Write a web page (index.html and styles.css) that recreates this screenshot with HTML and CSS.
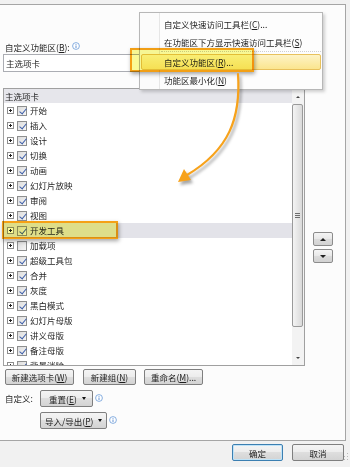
FILE: index.html
```html
<!DOCTYPE html>
<html lang="zh-CN">
<head>
<meta charset="utf-8">
<title>自定义功能区</title>
<link rel="stylesheet" href="styles.css">
</head>
<body>
<div class="screen">
  <div class="panel">
    <div class="field-label">自定义功能区(<u>B</u>):<svg class="info" viewBox="0 0 8 8"><circle cx="4" cy="4" r="3.4" fill="#fff" stroke="#6a9ad8" stroke-width="0.8"/><rect x="3.6" y="3.5" width="0.8" height="2.5" fill="#3f78c9"/><rect x="3.6" y="2" width="0.8" height="0.8" fill="#3f78c9"/></svg></div>
    <div class="combo">主选项卡</div>
    <div class="list-area">
      <div class="listbox">
        <div class="list-main">
          <div class="list-head">主选项卡</div>
          <div class="rows">
            <div class="row"><span class="exp"></span><span class="chk on"></span><span class="txt">开始</span></div>
            <div class="row"><span class="exp"></span><span class="chk on"></span><span class="txt">插入</span></div>
            <div class="row"><span class="exp"></span><span class="chk on"></span><span class="txt">设计</span></div>
            <div class="row"><span class="exp"></span><span class="chk on"></span><span class="txt">切换</span></div>
            <div class="row"><span class="exp"></span><span class="chk on"></span><span class="txt">动画</span></div>
            <div class="row"><span class="exp"></span><span class="chk on"></span><span class="txt">幻灯片放映</span></div>
            <div class="row"><span class="exp"></span><span class="chk on"></span><span class="txt">审阅</span></div>
            <div class="row"><span class="exp"></span><span class="chk on"></span><span class="txt">视图</span></div>
            <div class="row selected"><span class="exp"></span><span class="chk on"></span><span class="txt">开发工具</span></div>
            <div class="row"><span class="exp"></span><span class="chk"></span><span class="txt">加载项</span></div>
            <div class="row"><span class="exp"></span><span class="chk on"></span><span class="txt">超级工具包</span></div>
            <div class="row"><span class="exp"></span><span class="chk on"></span><span class="txt">合并</span></div>
            <div class="row"><span class="exp"></span><span class="chk on"></span><span class="txt">灰度</span></div>
            <div class="row"><span class="exp"></span><span class="chk on"></span><span class="txt">黑白模式</span></div>
            <div class="row"><span class="exp"></span><span class="chk on"></span><span class="txt">幻灯片母版</span></div>
            <div class="row"><span class="exp"></span><span class="chk on"></span><span class="txt">讲义母版</span></div>
            <div class="row"><span class="exp"></span><span class="chk on"></span><span class="txt">备注母版</span></div>
            <div class="row"><span class="exp"></span><span class="chk on"></span><span class="txt">背景消除</span></div>
          </div>
        </div>
        <div class="vscroll">
          <span class="sb-btn"><span class="tri up small"></span></span>
          <span class="sb-thumb"><span class="grip"></span></span>
          <span class="sb-track"></span>
          <span class="sb-btn"><span class="tri down small"></span></span>
        </div>
      </div>
      <div class="move-btns">
        <span class="mv"><span class="tri up"></span></span>
        <span class="mv"><span class="tri down"></span></span>
      </div>
    </div>
    <div class="btn-row">
      <span class="btn b-newtab">新建选项卡(<u>W</u>)</span>
      <span class="btn b-newgrp">新建组(<u>N</u>)</span>
      <span class="btn b-rename">重命名(<u>M</u>)...</span>
    </div>
    <div class="custom-row">
      <span class="custom-label">自定义:</span>
      <span class="btn dd b-reset">重置(<u>E</u>)<span class="caret"></span></span>
      <svg class="info" viewBox="0 0 8 8"><circle cx="4" cy="4" r="3.4" fill="#fff" stroke="#6a9ad8" stroke-width="0.8"/><rect x="3.6" y="3.5" width="0.8" height="2.5" fill="#3f78c9"/><rect x="3.6" y="2" width="0.8" height="0.8" fill="#3f78c9"/></svg>
    </div>
    <div class="custom-row second">
      <span class="btn dd b-export">导入/导出(<u>P</u>)<span class="caret"></span></span>
      <svg class="info" viewBox="0 0 8 8"><circle cx="4" cy="4" r="3.4" fill="#fff" stroke="#6a9ad8" stroke-width="0.8"/><rect x="3.6" y="3.5" width="0.8" height="2.5" fill="#3f78c9"/><rect x="3.6" y="2" width="0.8" height="0.8" fill="#3f78c9"/></svg>
    </div>
  </div>
  <div class="footer">
    <span class="btn b-ok">确定</span>
    <span class="btn b-cancel">取消</span>
    <svg class="grip-corner" viewBox="0 0 6 8"><rect x="4" y="1" width="1" height="1" fill="#b8b8b8"/><rect x="4" y="4" width="1" height="1" fill="#b8b8b8"/><rect x="1" y="4" width="1" height="1" fill="#b8b8b8"/><rect x="4" y="7" width="1" height="1" fill="#b8b8b8"/><rect x="1" y="7" width="1" height="1" fill="#b8b8b8"/></svg>
  </div>

  <div class="menu">
    <div class="mi">自定义快速访问工具栏(<u>C</u>)...</div>
    <div class="mi">在功能区下方显示快速访问工具栏(<u>S</u>)</div>
    <div class="msep"></div>
    <div class="mi hot"><span class="hot-bg">自定义功能区(<u>R</u>)...</span></div>
    <div class="mi">功能区最小化(<u>N</u>)</div>
  </div>

  <div class="callout c1"></div>
  <div class="callout c2"></div>

  <svg class="arrow" viewBox="0 0 350 467" width="350" height="467">
    <path d="M238,74 C241,118 229,150 187,175" fill="none" stroke="#f7a21b" stroke-width="2.2" stroke-linecap="round"/>
    <polygon points="178,182 191,180 184,169" fill="#f7a21b"/>
  </svg>
</div>
</body>
</html>
```

FILE: styles.css
```css
* { box-sizing: border-box; }
html, body { margin: 0; padding: 0; }
body {
  font-family: "Noto Sans CJK SC", "Noto Sans", sans-serif;
  font-size: 8.5px;
  color: #1e1e1e;
  background: #f0f0f0;
}
u { text-decoration: underline; text-underline-offset: 1px; }

.screen {
  position: relative;
  width: 350px;
  height: 467px;
  overflow: hidden;
  background: #f1f1f1;
}

.panel {
  margin-top: 4px;
  width: 346px;
  height: 437px;
  background: #fcfcfc;
  border-top: 1px solid #a5a5a5;
  border-right: 1px solid #a5a5a5;
  border-bottom: 1px solid #a5a5a5;
  padding-top: 37px;
}

.field-label {
  display: flex;
  align-items: center;
  height: 11px;
  line-height: 11px;
  padding-left: 5px;
  white-space: nowrap;
}
.info { width: 8px; height: 8px; margin-left: 2px; flex: none; }
.field-label .info { margin-top: -3px; }

.combo {
  margin: 1px 0 0 3px;
  width: 300px;
  height: 18px;
  border: 1px solid #abadb3;
  background: #fff;
  line-height: 16px;
  padding-left: 2px;
}

.list-area {
  display: flex;
  margin-top: 16px;
  margin-left: 3px;
}
.listbox {
  display: flex;
  width: 302px;
  height: 278px;
  border: 1px solid #a0a0a0;
  background: #fff;
}
.list-main {
  width: 288px;
  height: 276px;
  overflow: hidden;
}
.list-head {
  height: 14px;
  line-height: 14px;
  background: #e6e6eb;
  padding-left: 1px;
}
.row {
  display: flex;
  align-items: center;
  height: 15px;
  white-space: nowrap;
}
.row.selected { background: #e3e3e9; }
.exp {
  position: relative;
  width: 7px;
  height: 7px;
  margin-left: 3px;
  border: 1px solid #8d8d8d;
  background: #fff;
  flex: none;
}
.exp::before {
  content: "";
  position: absolute;
  left: 1px; top: 2px;
  width: 3px; height: 1px;
  background: #222;
}
.exp::after {
  content: "";
  position: absolute;
  left: 2px; top: 1px;
  width: 1px; height: 3px;
  background: #222;
}
.chk {
  position: relative;
  width: 10px;
  height: 10px;
  margin-left: 3px;
  border: 1px solid #8e8f8f;
  background: linear-gradient(135deg, #dcdcdc, #f6f6f6);
  flex: none;
}
.chk.on::after {
  content: "";
  position: absolute;
  left: 2.5px; top: 0px;
  width: 3px; height: 6px;
  border-right: 1.6px solid #3d5ea8;
  border-bottom: 1.6px solid #3d5ea8;
  transform: rotate(40deg);
}
.txt { margin-left: 3px; line-height: 15px; }

.vscroll {
  display: flex;
  flex-direction: column;
  width: 12px;
  height: 276px;
  background: #f3f3f3;
}
.sb-btn {
  display: flex;
  align-items: center;
  justify-content: center;
  height: 15px;
  flex: none;
}
.sb-thumb {
  display: flex;
  align-items: center;
  justify-content: center;
  height: 223px;
  margin: 0 1px 0 0;
  border: 1px solid #9a9a9a;
  border-radius: 2px;
  background: linear-gradient(to right, #f4f4f4, #dadada);
  flex: none;
}
.grip {
  width: 5px;
  height: 5px;
  background: repeating-linear-gradient(#6e6e6e 0 1px, transparent 1px 2px);
}
.sb-track { flex: 1; }

.tri {
  display: block;
  width: 0; height: 0;
  border-left: 3px solid transparent;
  border-right: 3px solid transparent;
}
.tri.up { border-bottom: 3px solid #222; }
.tri.down { border-top: 3px solid #222; }
.tri.small { border-left-width: 2.5px; border-right-width: 2.5px; }
.tri.small.up { border-bottom: 2.5px solid #444; }
.tri.small.down { border-top: 2.5px solid #444; }

.move-btns {
  display: flex;
  flex-direction: column;
  gap: 3px;
  margin-top: 144px;
  margin-left: 8px;
}
.mv {
  display: flex;
  align-items: center;
  justify-content: center;
  width: 20px;
  height: 14px;
  border: 1px solid #8c8c8c;
  border-radius: 2px;
  background: linear-gradient(#f5f5f5, #e8e8e8 50%, #dcdcdc 50%, #d2d2d2);
}

.btn {
  display: inline-flex;
  align-items: center;
  justify-content: center;
  height: 16px;
  border: 1px solid #7f7f7f;
  border-radius: 2px;
  background: linear-gradient(#f4f4f4, #ececec 50%, #dedede 50%, #d3d3d3);
  white-space: nowrap;
  line-height: 14px;
}

.btn-row {
  display: flex;
  margin-top: 3px;
  padding-left: 5px;
}
.b-newtab { width: 69px; }
.b-newgrp { width: 53px; margin-left: 9px; }
.b-rename { width: 59px; margin-left: 8px; }

.custom-row {
  display: flex;
  align-items: flex-start;
  margin-top: 5px;
  padding-left: 5px;
  height: 17px;
}
.custom-row.second { padding-left: 40px; }
.custom-label { width: 35px; line-height: 17px; }
.btn.dd { height: 17px; justify-content: flex-start; }
.b-reset { width: 53px; padding-left: 8px; }
.b-export { width: 67px; padding-left: 4px; }
.caret {
  display: inline-block;
  width: 0; height: 0;
  margin-left: 5px;
  border-left: 2.5px solid transparent;
  border-right: 2.5px solid transparent;
  border-top: 3px solid #111;
}
.custom-row .info { margin-top: 4px; }

.footer {
  position: relative;
  display: flex;
  justify-content: flex-end;
  gap: 9px;
  padding: 3px 6px 0 0;
}
.b-ok {
  width: 51px;
  height: 17px;
  border-color: #3c7fb1;
  box-shadow: inset 0 0 0 1px #bfe3f8;
}
.b-cancel { width: 52px; height: 17px; }
.grip-corner {
  position: absolute;
  right: 1px;
  bottom: 1px;
  width: 6px;
  height: 8px;
}

/* context menu overlay */
.menu {
  position: absolute;
  left: 139px;
  top: 12px;
  width: 184px;
  height: 78px;
  border: 1px solid #b7b7b7;
  background: linear-gradient(to right, #fbfbfb 0 19px, #e6e6e6 19px 20px, #fdfdfd 20px);
  box-shadow: 2px 2px 3px rgba(0, 0, 0, 0.18);
  padding-top: 2px;
  white-space: nowrap;
}
.mi {
  height: 18px;
  line-height: 18px;
  padding-left: 24px;
}
.msep {
  height: 3px;
  margin-left: 21px;
  margin-right: 1px;
  border-top: 1px dotted #cfcfcf;
}
.mi.hot {
  height: 17px;
  padding: 0 1px;
}
.hot-bg {
  display: block;
  height: 16px;
  line-height: 15px;
  padding-left: 22px;
  border: 1px solid #e8c15c;
  border-radius: 2px;
  background: linear-gradient(#fdf3c6, #fbe58e);
}

/* annotation callouts */
.callout {
  position: absolute;
  border: 2px solid #f5a115;
  background: rgb(250, 250, 150);
  mix-blend-mode: multiply;
  box-shadow: 1px 2px 4px rgba(0, 0, 0, 0.35);
}
.c1 { left: 130px; top: 48px; width: 124px; height: 24px; }
.c2 { left: 2px; top: 221px; width: 116px; height: 18px; }

.arrow {
  position: absolute;
  left: 0;
  top: 0;
  pointer-events: none;
  filter: drop-shadow(2px 3px 1.5px rgba(0, 0, 0, 0.35));
}
```
